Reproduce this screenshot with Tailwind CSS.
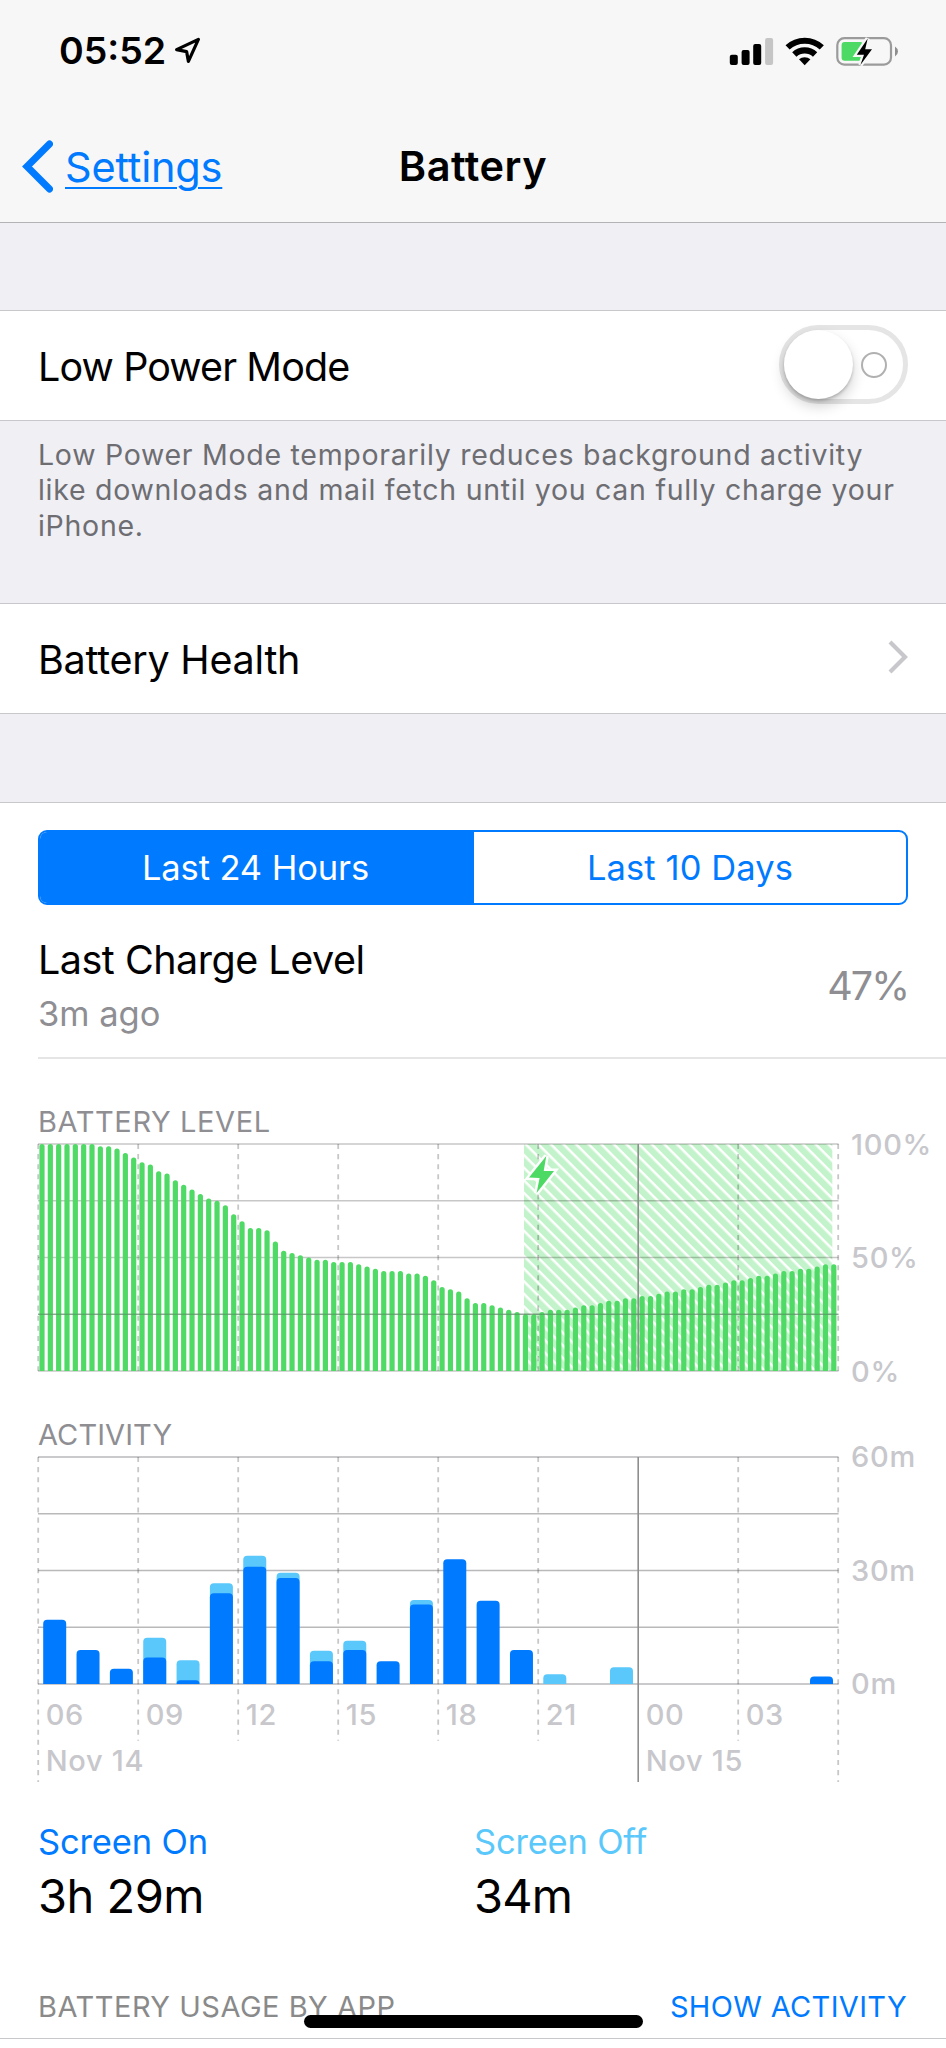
<!DOCTYPE html>
<html lang="en">
<head>
  <meta charset="UTF-8">
  <meta name="viewport" content="width=device-width, initial-scale=1.0">
  <script src="https://cdn.jsdelivr.net/npm/@tailwindcss/browser@4"></script>
  <title>Battery</title>
</head>
<body class="bg-[#efeff4] text-black font-['Inter','Liberation_Sans',sans-serif] w-[946px] h-[2048px] overflow-hidden relative">

  <!-- Header -->
  <header class="h-[223px] bg-[#f7f7f7] border-b border-[#b2b2b7]">

    <!-- Status bar -->
    <div class="h-[101px] flex items-center justify-between pl-[59px] pr-[47px]">
      <div class="flex items-center gap-[8px]">
        <span class="text-[37.5px] leading-none font-semibold">05:52</span>
        <svg class="w-[28px] h-[28px]" viewBox="0 0 28 28" fill="none" stroke="black" stroke-width="3.2" stroke-linejoin="round">
          <path d="M2.6 12.6 L24.4 2.4 L14.4 24.4 L12.6 14.6 Z"/>
        </svg>
      </div>
      <div class="flex items-center">
        <svg class="w-[170px] h-[30px]" viewBox="729 35 170 30">
          <!-- signal -->
          <rect x="729.8" y="53.7" width="8" height="10.3" rx="2"/>
          <rect x="741.6" y="49" width="8" height="15" rx="2"/>
          <rect x="753.2" y="43" width="8" height="21" rx="2"/>
          <rect x="765.1" y="37" width="8" height="27" rx="2" fill="#c5c5c5"/>
          <!-- wifi -->
          <g fill="none" stroke="black">
            <path stroke-width="6" d="M787.6 46.4 A25 25 0 0 1 821.8 46.4"/>
            <path stroke-width="6.2" d="M794.3 53.5 A15.2 15.2 0 0 1 815.1 53.5"/>
          </g>
          <path d="M804.7 64.2 L799 58.3 A8.6 8.6 0 0 1 810.4 58.3 Z"/>
          <!-- battery -->
          <rect x="837.3" y="37.2" width="53.7" height="26.4" rx="7" fill="none" stroke="#9b9b9b" stroke-width="2.2"/>
          <path d="M895 45.5 Q898 47.5 898 50.5 Q898 53.5 895 55.5 Z" fill="#8e8e8e"/>
          <rect x="841.6" y="41" width="21.6" height="18.8" rx="3" fill="#4cd964"/>
          <path d="M867.7 37.5 L856.8 53.8 L864 53.8 L860.4 64 L872 48.2 L865.2 48.2 Z" stroke="#f7f7f7" stroke-width="4.5" fill="#f7f7f7"/>
          <path d="M867.7 37.5 L856.8 53.8 L864 53.8 L860.4 64 L872 48.2 L865.2 48.2 Z"/>
        </svg>
      </div>
    </div>

    <!-- Nav bar -->
    <div class="h-[131px] grid grid-cols-3 items-center pl-[22px] pr-[22px]">
      <a href="#" class="flex items-center gap-[12px] text-[#007aff]">
        <svg class="w-[31px] h-[53px]" viewBox="0 0 31 53" fill="none" stroke="#007aff" stroke-width="7" stroke-linecap="round" stroke-linejoin="miter">
          <path d="M27.5 4 L5 26.5 L27.5 49"/>
        </svg>
        <span class="pt-[2px] text-[41.5px] leading-none tracking-[-0.2px] underline decoration-2 underline-offset-[5px]">Settings</span>
      </a>
      <h1 class="pt-px text-center text-[41.5px] leading-none font-semibold tracking-[0.5px]">Battery</h1>
    </div>
  </header>

  <!-- Low Power Mode -->
  <section class="mt-[87px] h-[111px] bg-white border-y border-[#c8c7cc] flex items-center justify-between pl-[38px] pr-[38px]">
    <span class="text-[39.5px] leading-none tracking-[-0.9px] pt-[5px]">Low Power Mode</span>
    <div class="w-[129px] h-[79px] mb-[3px] rounded-full border-[5px] border-[#e5e5e5] flex items-center justify-between pr-[16px]">
      <div class="size-[69px] rounded-full bg-white shadow-[0_7px_14px_rgba(0,0,0,0.18),0_2px_3px_rgba(0,0,0,0.2)]"></div>
      <div class="size-[26px] mt-[2px] rounded-full border-[2.5px] border-[#b0b0b0]"></div>
    </div>
  </section>
  <p class="h-[182px] pt-[16px] pl-[38px] text-[28.5px] leading-[35.4px] tracking-[0.72px] text-[#6d6d72] whitespace-nowrap">
    Low Power Mode temporarily reduces background activity<br>
    like downloads and mail fetch until you can fully charge your<br>
    iPhone.
  </p>

  <!-- Battery Health -->
  <section class="h-[111px] bg-white border-y border-[#c8c7cc] flex items-center justify-between pl-[38px] pr-[38px]">
    <span class="text-[39.5px] leading-none tracking-[-0.25px] pt-[4px]">Battery Health</span>
    <svg class="w-[20px] h-[34px] mb-[4px]" viewBox="0 0 20 34" fill="none" stroke="#c7c7cc" stroke-width="4.2">
      <path d="M2 2 L17 17 L2 32"/>
    </svg>
  </section>

  <!-- Usage -->
  <main class="mt-[88px] h-[1246px] bg-white border-t border-[#c8c7cc] pt-[27px]">

    <div class="mx-[38px] h-[75px] rounded-[9px] border-2 border-[#007aff] grid grid-cols-[434px_1fr] overflow-hidden text-[34.5px] leading-none">
      <div class="bg-[#007aff] text-white flex items-center justify-center pt-[2px] pr-[3px] tracking-[-0.1px]">Last 24 Hours</div>
      <div class="text-[#007aff] flex items-center justify-center pt-[2px] tracking-[0.1px]">Last 10 Days</div>
    </div>

    <div class="ml-[38px] pr-[38px] h-[154px] border-b-2 border-[#e5e5e6] flex justify-between">
      <div class="pt-[35px]">
        <div class="text-[39.5px] leading-[40px] tracking-[-0.5px]">Last Charge Level</div>
        <div class="mt-[15px] text-[34.5px] leading-[38px] text-[#8e8e93]">3m ago</div>
      </div>
      <div class="pt-[61px] text-[39.5px] leading-[40px] tracking-[-2px] text-[#8e8e93]">47%</div>
    </div>

    <svg id="charts" class="block w-[946px] h-[742px]" viewBox="0 1059 946 742"></svg>

    <!-- Totals -->
    <div class="grid grid-cols-2 pl-[38px] pr-[36px] pt-[21px]">
      <div>
        <div class="text-[34.5px] leading-[40px] tracking-[-0.15px] text-[#007aff]">Screen On</div>
        <div class="mt-[9px] text-[47px] leading-[50px] tracking-[-0.5px]">3h 29m</div>
      </div>
      <div>
        <div class="text-[34.5px] leading-[40px] tracking-[-0.2px] text-[#5ac8fa]">Screen Off</div>
        <div class="mt-[9px] text-[47px] leading-[50px] tracking-[-0.8px]">34m</div>
      </div>
    </div>

    <div class="mt-[66px] h-[52px] pt-px border-b border-[#c8c7cc] pl-[38px] pr-[39px] flex justify-between text-[29px] leading-[38px]">
      <span class="tracking-[0.5px] text-[#8a8a8a]">BATTERY USAGE BY APP</span>
      <span class="tracking-[0.35px] text-[#007aff]">SHOW ACTIVITY</span>
    </div>
  </main>

  <!-- Home indicator -->
  <div class="absolute left-[304px] top-[2015px] w-[339px] h-[13px] rounded-full bg-black"></div>

  <script>
    const levels = [
      100, 100, 100, 100, 100, 100, 100, 99, 99, 98, 96, 94, 92, 91, 88, 87, 84, 82, 80, 78, 76, 75, 73, 69,
      66, 63, 63, 62, 57, 53, 52, 51, 50, 49, 49, 48, 48, 48, 47, 46, 45, 44, 44, 44, 43, 43, 42, 40,
      37, 36, 35, 32, 30, 30, 29, 28, 27, 26, 25, 25, 26, 27, 27, 27, 28, 29, 29, 30, 31, 31, 32, 32,
      33, 33, 34, 35, 35, 36, 36, 37, 38, 38, 39, 40, 40, 41, 42, 42, 43, 44, 44, 45, 45, 46, 47, 47
    ];
    // [total minutes, minutes with screen on] per hour
    const activity = [
      [17, 17], [9, 9], [4, 4], [12.2, 7], [6.3, 1], [26.6, 24], [33.9, 31], [29.4, 28],
      [8.8, 6], [11.4, 9], [6, 6], [22.2, 21], [33, 33], [22, 22], [9, 9], [2.6, 0],
      [0, 0], [4.4, 0], [0, 0], [0, 0], [0, 0], [0, 0], [0, 0], [2, 2]
    ];
    const hours = ['06', '09', '12', '15', '18', '21', '00', '03'];
    const left = 38.2, step = 100, height = 227;

    const hline = (y, color = '#c9c9cb', w = 1.7) =>
      `<line x1="38" x2="838.5" y1="${y}" y2="${y}" stroke="${color}" stroke-width="${w}"/>`;

    const vline = (i, y1, y2) => {
      const x = left + i * step;
      return i === 6
        ? `<line x1="${x}" x2="${x}" y1="${y1}" y2="${y2}" stroke="#8e8e8e" stroke-width="1.6"/>`
        : `<line x1="${x}" x2="${x}" y1="${y1}" y2="${y2}" stroke="#000" stroke-opacity=".22" stroke-width="1.8" stroke-dasharray="5.05 5.05"/>`;
    };

    // bar with only the top corners rounded
    const bar = (x, base, w, h, r, color) => {
      if (h <= 0) return '';
      r = Math.min(r, h);
      return `<path fill="${color}" d="M${x} ${base} v${-(h - r)} q0 ${-r} ${r} ${-r} h${w - 2 * r} q${r} 0 ${r} ${r} v${h - r} z"/>`;
    };

    const text = (x, y, s, cls) => `<text x="${x}" y="${y}" font-size="29" class="${cls}">${s}</text>`;
    const title = 'fill-[#8e8e93] tracking-[0.6px]';
    const label = 'fill-[#c7c7cc] font-medium tracking-[0.7px]';

    let out = `<defs>
      <pattern id="hatch" width="8.92" height="8.92" patternUnits="userSpaceOnUse" patternTransform="rotate(45 524 1144)">
        <rect width="8.92" height="8.92" fill="#c3f3ca"/>
        <rect width="8.92" height="2.5" fill="#fff"/>
      </pattern>
    </defs>`;

    // Battery level
    const top1 = 1144;
    out += text(38, 1132.3, 'BATTERY LEVEL', title);
    out += `<rect x="524" y="${top1}" width="308.3" height="${height}" fill="url(#hatch)"/>`;
    for (let i = 0; i < 5; i++) out += hline(top1 + i * height / 4, '#00000038');
    for (let i = 0; i < 9; i++) out += vline(i, top1, top1 + height);
    levels.forEach((v, i) => {
      out += bar(39.4 + i * 8.335, top1 + height, 5.2, v / 100 * height, 2.6, '#4fd965');
    });
    out += hline(top1 + height * .75, '#55775b99', 1);
    const bolt = 'M546.3 1156 L529 1177.6 L539.6 1178 L536.6 1193 L554 1171 L543.7 1171 Z';
    out += `<path d="${bolt}" fill="#fff" stroke="#fff" stroke-width="5"/><path d="${bolt}" fill="#4cd964"/>`;
    ['100%', '50%', '0%'].forEach((s, i) => out += text(851, top1 + 10.6 + i * height / 2, s, label));

    // Activity
    const top2 = 1457;
    out += text(38, 1445, 'ACTIVITY', 'fill-[#8e8e93] tracking-[0.1px]');
    for (let i = 0; i < 5; i++) out += hline(top2 + i * height / 4, '#b9b9bb', 1.4);
    for (let i = 0; i < 9; i++) {
      const full = i % 8 === 0 || i === 6;
      out += vline(i, top2, full ? 1782 : 1740.7);
    }
    activity.forEach(([total, on], i) => {
      const x = 43.2 + i * 33.34;
      if (total > on) out += bar(x, top2 + height, 23, total / 60 * height, 4, '#5ac8fa');
      out += bar(x, top2 + height, 23, on / 60 * height, 4, '#007aff');
    });
    ['60m', '30m', '0m'].forEach((s, i) => out += text(851, top2 + 10.3 + i * height / 2, s, label));
    hours.forEach((s, i) => out += text(45.7 + i * step, 1725, s, label));
    out += text(45.7, 1771, 'Nov 14', label);
    out += text(645.7, 1771, 'Nov 15', label);

    document.getElementById('charts').innerHTML = out;
  </script>
</body>
</html>
